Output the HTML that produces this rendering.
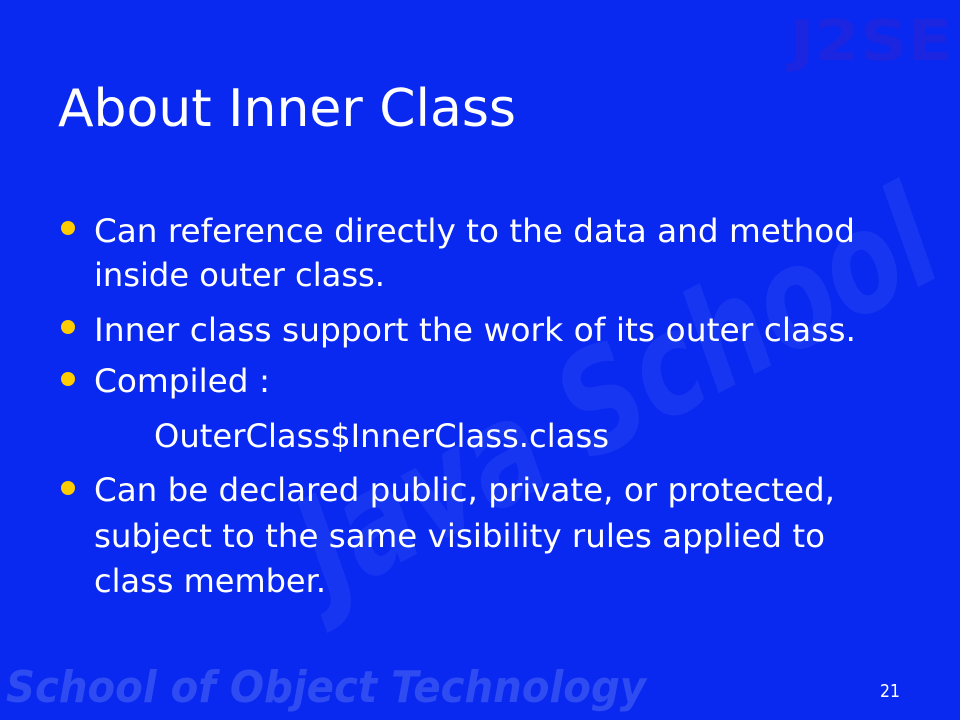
<!DOCTYPE html>
<html><head><meta charset="utf-8"><style>
html,body{margin:0;padding:0;background:#0928f0;}
svg{display:block}
</style></head><body>
<svg width="960" height="720" viewBox="0 0 960 720" xmlns="http://www.w3.org/2000/svg">
<rect width="960" height="720" fill="#0928f0"/>
<g font-family="DejaVu Sans, sans-serif" font-weight="bold" font-style="italic">
<text x="0" y="0" transform="translate(330,600) rotate(-28)" font-size="140" fill="#2a48f4" opacity="0.45" textLength="700" lengthAdjust="spacingAndGlyphs">Java School</text>
</g>
<text x="790" y="60" font-family="DejaVu Sans, sans-serif" font-weight="bold" font-size="56" fill="#2a24d6" textLength="162" lengthAdjust="spacingAndGlyphs" opacity="0.6">J2SE</text>
<text x="6" y="702" font-family="DejaVu Sans, sans-serif" font-weight="bold" font-style="italic" font-size="44" fill="#2e4cf2" textLength="640" lengthAdjust="spacingAndGlyphs">School of Object Technology</text>
<g font-family="DejaVu Sans, sans-serif" fill="#ffffff">
<text x="58" y="126" font-size="52" textLength="458" lengthAdjust="spacingAndGlyphs">About Inner Class</text>
<g font-size="32">
<text x="94" y="242" textLength="761" lengthAdjust="spacingAndGlyphs">Can reference directly to the data and method</text>
<text x="94" y="286" textLength="291" lengthAdjust="spacingAndGlyphs">inside outer class.</text>
<text x="94" y="341" textLength="762" lengthAdjust="spacingAndGlyphs">Inner class support the work of its outer class.</text>
<text x="94" y="392" textLength="176" lengthAdjust="spacingAndGlyphs">Compiled :</text>
<text x="154" y="447" textLength="455" lengthAdjust="spacingAndGlyphs">OuterClass$InnerClass.class</text>
<text x="94" y="501" textLength="741" lengthAdjust="spacingAndGlyphs">Can be declared public, private, or protected,</text>
<text x="94" y="547" textLength="731" lengthAdjust="spacingAndGlyphs">subject to the same visibility rules applied to</text>
<text x="94" y="592" textLength="232" lengthAdjust="spacingAndGlyphs">class member.</text>
</g>
<text x="880" y="697" font-size="18" textLength="20" lengthAdjust="spacingAndGlyphs">21</text>
</g>
<g fill="#ffcc00">
<circle cx="68" cy="228" r="7"/>
<circle cx="68" cy="327" r="7"/>
<circle cx="68" cy="379" r="7"/>
<circle cx="68" cy="488" r="7"/>
</g>
</svg>
</body></html>
